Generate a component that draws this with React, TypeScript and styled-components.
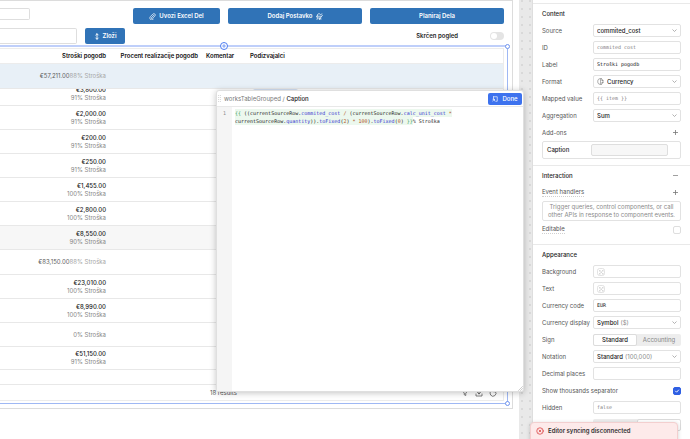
import React from "react";
import styled, { createGlobalStyle } from "styled-components";

const SANS = `Inter, "Liberation Sans", sans-serif`;
const MONO = `"DejaVu Sans Mono", "Liberation Mono", monospace`;

const GlobalStyle = createGlobalStyle`
  *, *::before, *::after { box-sizing: border-box; }
  body { margin: 0; background: #fff; overflow: hidden; }
  button, input, select { font: inherit; color: inherit; margin: 0; padding: 0; min-width: 0; }
  svg { display: block; flex: none; }
`;

const Shell = styled.div`
  position: relative;
  display: flex;
  height: 100vh;
  overflow: hidden;
  font-family: ${SANS};
  font-size: 6px;
  line-height: 8px;
  color: #1f1f1f;
`;

/* ---------- canvas ---------- */

const Workspace = styled.div`
  flex: 1;
  min-width: 0;
  padding-right: 13px;
  background: radial-gradient(circle at 1px 1px, #d9d9d9 1px, transparent 1px) 1px 0 / 8px 8px, #e9e9e9;
`;

const Page = styled.main`
  height: 100%;
  padding-right: 6px;
  background: #fff;
`;

const Frame = styled.div`
  border: solid #dcdcdc;
  border-width: 1px 1px 1px 0;
  padding: 7px 4px 4px 0;
`;

const ActionBar = styled.div`
  display: grid;
  grid-template-columns: 125px 87fr 134fr 134fr;
  gap: 8px;
  padding-right: 4px;
`;

const FilterBar = styled.div`
  display: flex;
  align-items: center;
  margin-top: 4px;
  padding-right: 4px;
`;

const SearchInput = styled.input<{ $w: number; $h: number }>`
  width: ${(p) => p.$w}px;
  height: ${(p) => p.$h}px;
  border: 1px solid #dedede;
  border-left: 0;
  border-radius: 0 2px 2px 0;
  background: #fff;
  outline: none;
`;

const PrimaryButton = styled.button`
  display: flex;
  align-items: center;
  justify-content: center;
  gap: 3px;
  height: 16px;
  padding: 0 9px;
  border: 0;
  border-radius: 2px;
  background: #3073b7;
  color: #fff;
  font-weight: 600;
`;

const CollapseButton = styled(PrimaryButton)`
  width: 40px;
  margin-left: 8px;
  padding: 0;
`;

const SwitchLabel = styled.label`
  display: flex;
  flex: 1;
  align-items: center;
  justify-content: flex-end;
  gap: 32px;
  font-weight: 600;
`;

const Switch = styled.input`
  appearance: none;
  display: flex;
  width: 14px;
  height: 8px;
  padding: 1px;
  border-radius: 4px;
  background: #e4e4e4;
  &::before {
    content: "";
    width: 6px;
    height: 6px;
    border-radius: 3px;
    background: #fff;
  }
`;

const Selection = styled.div`
  position: relative;
  margin-top: 1px;
  padding: 1px 3px 2px 0;
  border: solid #9fb8f4;
  border-width: 2px 1px 1px 0;
  border-top-color: #bfcffa;
`;

const Handle = styled.span<{ $corner: "top" | "bottom" }>`
  position: absolute;
  right: -3px;
  ${(p) => p.$corner}: -3px;
  width: 5px;
  height: 5px;
  border: 1px solid #6f94ee;
  border-radius: 3px;
  background: #fff;
`;

const AddHandle = styled.button`
  position: absolute;
  left: 220px;
  top: -5px;
  display: grid;
  place-items: center;
  width: 8px;
  height: 8px;
  border: 1px solid #4d7cf0;
  border-radius: 4px;
  background: #fff;
  color: #4d7cf0;
`;

const Grid = styled.table`
  width: 100%;
  table-layout: fixed;
  border-collapse: separate;
  border-spacing: 0;
  border: solid #ececec;
  border-width: 1px 1px 0 0;
`;

const HeadCell = styled.th<{ $right?: boolean }>`
  height: 15px;
  padding: 0 8px 0 0;
  border-bottom: 1px solid #ececec;
  text-align: ${(p) => (p.$right ? "right" : "left")};
  font-weight: 600;
  white-space: nowrap;
  color: #111;
`;

type Tone = "plain" | "group" | "hover";
const toneBg = { plain: "#fff", group: "#e8f0f7", hover: "#f7f7f7" };

const Row = styled.tr<{ $h: number; $tone: Tone }>`
  height: ${(p) => p.$h}px;
  background: ${(p) => toneBg[p.$tone]};
`;

const Cell = styled.td`
  padding: 0 8px 0 0;
  border-bottom: 1px solid #e8e8e8;
  text-align: right;
  white-space: nowrap;
`;

const Clip = styled.div`
  display: flex;
  flex-direction: column;
  justify-content: flex-end;
  height: 16px;
  padding-bottom: 3px;
  overflow: hidden;
`;

const Tag = styled.div`
  width: 45px;
  height: 12px;
  margin: 0 0 4px 3px;
  border-radius: 2px;
  background: #d3e0f4;
`;

const Amount = styled.div`
  font-weight: 500;
  color: #1a1a1a;
`;

const Caption = styled.div`
  color: #858585;
`;

const Summary = styled.span`
  color: #5d5d5d;
  small { font-size: 6px; color: #a6a6a6; }
`;

const TableFooter = styled.footer`
  display: flex;
  align-items: center;
  justify-content: flex-end;
  height: 16px;
  padding-right: 6px;
  border: solid #ececec;
  border-width: 0 1px 1px 0;
  color: #555;
`;

const ResultCount = styled.span`
  margin-right: auto;
  margin-left: 210px;
`;

const FooterIcons = styled.div`
  display: flex;
  gap: 6px;
`;

/* ---------- code popup ---------- */

const Popup = styled.section`
  position: absolute;
  left: 216px;
  right: 166px;
  top: 90px;
  height: 302px;
  display: flex;
  flex-direction: column;
  border: 1px solid #dfdfdf;
  border-radius: 3px;
  background: #fff;
  box-shadow: 0 1px 6px rgba(0, 0, 0, 0.24);
`;

const PopupHeader = styled.header`
  display: flex;
  align-items: center;
  gap: 3px;
  height: 16px;
  padding: 0 1px;
  border-bottom: 1px solid #e8e8e8;
  color: #777;
  strong { font-weight: 500; color: #222; }
`;

const DoneButton = styled.button`
  display: flex;
  align-items: center;
  justify-content: center;
  gap: 4px;
  width: 34px;
  height: 12px;
  margin-left: auto;
  border: 0;
  border-radius: 2px;
  background: #3d72ee;
  color: #fff;
  font-weight: 500;
`;

const Editor = styled.div`
  display: flex;
  flex: 1;
  font-family: ${MONO};
  font-size: 5px;
  line-height: 8px;
`;

const Gutter = styled.div`
  width: 15px;
  padding: 2px 6px 0 0;
  background: #f5f5f5;
  color: #8b8b8b;
  text-align: right;
`;

const Code = styled.pre`
  margin: 0;
  padding: 2px 3px;
  font: inherit;
  color: #1c1c1c;
`;

const Template = styled.span`
  padding: 1px 0;
  background: #ecf8ee;
`;

const Tok = styled.span<{ $c: "brace" | "prop" | "num" }>`
  color: ${(p) => ({ brace: "#3ba35c", prop: "#3434d0", num: "#b3541e" })[p.$c]};
`;

const Grip = styled.svg`
  position: absolute;
  right: 0;
  bottom: 0;
`;

/* ---------- inspector ---------- */

const Inspector = styled.aside`
  flex: none;
  width: 158px;
  height: 100%;
  overflow: hidden;
  border-left: 1px solid #dedede;
  background: #fff;
  color: #555;
`;

const Section = styled.section`
  padding: 1px 9px 6px;
  border-top: 1px solid #e9e9e9;
`;

const InspectorTop = styled.div`
  height: 3px;
`;

const Line = styled.div`
  display: flex;
  align-items: center;
  justify-content: space-between;
  height: 17px;
`;

const Title = styled.h2`
  margin: 0;
  font-size: 6px;
  font-weight: 500;
  color: #222;
`;

const Name = styled.label<{ $hint?: boolean }>`
  white-space: nowrap;
  border-bottom: ${(p) => (p.$hint ? "1px dotted #d0d0d0" : "0")};
`;

const Field = styled.span`
  display: flex;
  align-items: center;
  gap: 3px;
  width: 88px;
  height: 13px;
  padding: 0 3px;
  border: 1px solid #e2e2e2;
  border-radius: 2px;
  background: #fff;
`;

const MonoInput = styled.input`
  width: 100%;
  height: 11px;
  border: 0;
  outline: 0;
  background: transparent;
  font-family: ${MONO};
  font-size: 5px;
  line-height: 11px;
  color: #111;
  &::placeholder { color: #808080; opacity: 1; }
`;

const SelectBox = styled.select`
  appearance: none;
  flex: 1;
  border: 0;
  outline: 0;
  background: transparent;
  font-weight: 500;
  color: #262626;
`;

const Rich = styled.button`
  display: flex;
  flex: 1;
  gap: 2px;
  border: 0;
  background: transparent;
  font-weight: 500;
  color: #262626;
  span { font-weight: 400; color: #8a8a8a; }
`;

const IconButton = styled.button`
  display: flex;
  justify-content: center;
  width: 12px;
  border: 0;
  background: transparent;
  color: #777;
`;

const Addon = styled.div`
  display: flex;
  align-items: center;
  justify-content: space-between;
  height: 18px;
  padding: 0 12px 0 4px;
  border: 1px solid #e2e2e2;
  border-radius: 2px;
  color: #262626;
  font-weight: 500;
`;

const AddonValue = styled.input`
  width: 77px;
  height: 12px;
  border: 1px solid #dedede;
  border-radius: 2px;
  background: #f7f7f7;
`;

const EmptyState = styled.p`
  margin: 0;
  padding: 1px 4px;
  border: 1px solid #e2e2e2;
  border-radius: 2px;
  text-align: center;
  color: #8a8a8a;
`;

const Check = styled.input`
  appearance: none;
  width: 8px;
  height: 8px;
  border: 1px solid #dedede;
  border-radius: 2px;
  background: #fff;
  &:checked {
    border-color: #2f5fe3;
    background: #2f5fe3;
  }
`;

const CheckWrap = styled.span`
  display: grid;
  place-items: center;
  > * { grid-area: 1 / 1; }
  svg { z-index: 1; pointer-events: none; }
`;

const Segments = styled.div`
  display: grid;
  grid-template-columns: 1fr 1fr;
  width: 88px;
  height: 12px;
  border-radius: 2px;
  background: #ededed;
`;

const Segment = styled.button<{ $on?: boolean }>`
  border: 1px solid ${(p) => (p.$on ? "#dcdcdc" : "transparent")};
  border-radius: 2px;
  background: ${(p) => (p.$on ? "#fff" : "transparent")};
  color: ${(p) => (p.$on ? "#222" : "#858585")};
  font-weight: ${(p) => (p.$on ? 500 : 400)};
`;

const Toast = styled.div`
  position: absolute;
  right: 12px;
  bottom: -12px;
  display: flex;
  gap: 4px;
  width: 148px;
  height: 29px;
  padding: 4px 5px;
  border: 1px solid #f3cfcf;
  border-radius: 4px;
  background: #fdeaea;
  box-shadow: 0 1px 4px rgba(0, 0, 0, 0.18);
  color: #333;
  font-weight: 600;
`;

/* ---------- icons ---------- */

const stroke = { fill: "none", stroke: "currentColor", strokeLinecap: "round", strokeLinejoin: "round" } as const;

const Chevron = () => (
  <svg width="5" height="5" viewBox="0 0 10 10" {...stroke} stroke="#a0a0a0" strokeWidth="1.6"><path d="M1.5 3.5 5 7l3.5-3.5" /></svg>
);
const Plus = () => (
  <svg width="5" height="5" viewBox="0 0 10 10" {...stroke} strokeWidth="1.6"><path d="M5 0.8v8.4M0.8 5h8.4" /></svg>
);
const Minus = () => (
  <svg width="5" height="5" viewBox="0 0 10 10" {...stroke} strokeWidth="1.4"><path d="M0.8 5h8.4" /></svg>
);
const PaperClip = () => (
  <svg width="7" height="7" viewBox="0 0 14 14" {...stroke} strokeWidth="1.4">
    <path d="M9.5 4.5 5 9a1.3 1.3 0 0 0 1.9 1.9l5-5A2.8 2.8 0 0 0 7.9 2L2.8 7.1a4 4 0 0 0 5.7 5.7" />
  </svg>
);
const Barrow = () => (
  <svg width="7" height="7" viewBox="0 0 14 14" {...stroke} strokeWidth="1.4">
    <path d="M1 6.5h10L9 10H4zM3 6V3l3-2 3 2 3-1M11 6.5 13 5M3 10l-1 3M9 10l1 2" /><circle cx="7" cy="12" r="1" />
  </svg>
);
const UpDown = () => (
  <svg width="6" height="7" viewBox="0 0 12 14" {...stroke} strokeWidth="1.8"><path d="M6 1.5v11M3.5 4 6 1.5 8.5 4M3.5 10 6 12.5 8.5 10" /></svg>
);
const DoneIcon = () => (
  <svg width="6" height="6" viewBox="0 0 12 12" {...stroke} strokeWidth="1.3">
    <path d="M3 1.5h7.5v9H7.5M3 1.5v5M1 10.5l4-4M2 6.5h3v3" />
  </svg>
);
const Coins = () => (
  <svg width="7" height="7" viewBox="0 0 14 14" {...stroke} stroke="#777" strokeWidth="1.3">
    <path d="M8 1.5H5.5C3 1.5 1.5 4 1.5 7s1.5 5.5 4 5.5H8" /><path d="M8 1.5c2.5 0 4 2.5 4 5.5s-1.5 5.5-4 5.5M8 1.5C6.500 3 6.500 11 8 12.5M10 5h2M10 9h2" />
  </svg>
);
const Swatch = () => (
  <svg width="8" height="8" viewBox="0 0 16 16">
    <rect x="1" y="1" width="14" height="14" rx="4" fill="#fff" stroke="#dadada" strokeWidth="1.5" />
    <path d="M4 4h3v3H4zM10 4h3v3h-3zM7 7h3v3H7zM4 10h3v3H4zM10 10h3v3h-3z" fill="#d8d8d8" />
  </svg>
);
const Dots = () => (
  <svg width="3" height="7" viewBox="0 0 6 14" fill="#aaa">
    {[1, 5, 9, 13].map((y) => (<g key={y}><circle cx="1.5" cy={y} r="0.9" /><circle cx="4.5" cy={y} r="0.9" /></g>))}
  </svg>
);

/* ---------- data ---------- */

type RowData = { h: number; tone?: Tone; amount?: string; pct?: string; summary?: boolean; clipped?: boolean };

const rows: RowData[] = [
  { h: 25, tone: "group", amount: "€57,211.00", pct: "88%", summary: true },
  { h: 17, amount: "€3,800.00", pct: "91%", clipped: true },
  { h: 24, amount: "€2,000.00", pct: "91%" },
  { h: 24, amount: "€200.00", pct: "91%" },
  { h: 24, amount: "€250.00", pct: "91%" },
  { h: 24, amount: "€1,455.00", pct: "100%" },
  { h: 24, amount: "€2,800.00", pct: "100%" },
  { h: 24, tone: "hover", amount: "€8,550.00", pct: "90%" },
  { h: 25, amount: "€83,150.00", pct: "88%", summary: true },
  { h: 24, amount: "€23,010.00", pct: "100%" },
  { h: 24, amount: "€8,990.00", pct: "100%" },
  { h: 24, pct: "0%" },
  { h: 23, amount: "€51,150.00", pct: "91%" },
  { h: 15 },
];

function CellContent({ row }: { row: RowData }) {
  if (!row.pct) return null;
  if (row.summary) return <Summary>{row.amount}<small>{row.pct} Stroška</small></Summary>;
  const body = (
    <>
      {row.amount && <Amount>{row.amount}</Amount>}
      <Caption>{row.pct} Stroška</Caption>
    </>
  );
  return row.clipped ? <Clip>{body}</Clip> : body;
}

function SelectLine({ label, value, icon }: { label: string; value: string; icon?: React.ReactNode }) {
  return (
    <Line>
      <Name htmlFor={label}>{label}</Name>
      <Field>{icon}<SelectBox id={label}><option>{value}</option></SelectBox><Chevron /></Field>
    </Line>
  );
}

function RichSelectLine({ label, value, note }: { label: string; value: string; note: string }) {
  return (
    <Line>
      <Name htmlFor={label}>{label}</Name>
      <Field><Rich id={label} aria-haspopup="listbox">{value} <span>{note}</span></Rich><Chevron /></Field>
    </Line>
  );
}

function TextLine({ label, value, placeholder, swatch }: { label: string; value?: string; placeholder?: string; swatch?: boolean }) {
  return (
    <Line>
      <Name htmlFor={label}>{label}</Name>
      <Field>{swatch && <Swatch />}<MonoInput id={label} defaultValue={value} placeholder={placeholder} /></Field>
    </Line>
  );
}

export default function App() {
  return (
    <>
      <GlobalStyle />
      <Shell>
        <Workspace>
          <Page>
            <Frame>
              <ActionBar>
                <SearchInput $w={30} $h={12} aria-label="Filter" />
                <PrimaryButton><PaperClip />Uvozi Excel Del</PrimaryButton>
                <PrimaryButton>Dodaj Postavko<Barrow /></PrimaryButton>
                <PrimaryButton>Planiraj Dela</PrimaryButton>
              </ActionBar>
              <FilterBar>
                <SearchInput $w={77} $h={16} aria-label="Search" />
                <CollapseButton><UpDown />Zloži</CollapseButton>
                <SwitchLabel>Skrčen pogled<Switch type="checkbox" role="switch" /></SwitchLabel>
              </FilterBar>
              <Selection>
                <Grid>
                  <colgroup><col width="114" /><col width="92" /><col width="44" /><col /></colgroup>
                  <thead>
                    <tr>
                      <HeadCell $right>Stroški pogodb</HeadCell>
                      <HeadCell $right>Procent realizacije pogodb</HeadCell>
                      <HeadCell>Komentar</HeadCell>
                      <HeadCell>Podizvajalci</HeadCell>
                    </tr>
                  </thead>
                  <tbody>
                    {rows.map((r, i) => (
                      <Row key={i} $h={r.h} $tone={r.tone ?? "plain"}>
                        <Cell><CellContent row={r} /></Cell><Cell /><Cell /><Cell>{r.clipped && <Tag />}</Cell>
                      </Row>
                    ))}
                  </tbody>
                </Grid>
                <TableFooter>
                  <ResultCount>18 results</ResultCount>
                  <FooterIcons>
                    <svg width="8" height="8" viewBox="0 0 16 16" {...stroke} strokeWidth="1.5"><path d="M2 3h12L9.500 8.500V13l-3-1.500v-3z" /></svg>
                    <svg width="8" height="8" viewBox="0 0 16 16" {...stroke} strokeWidth="1.5"><path d="M8 2v8M5 7l3 3 3-3M2 10v4h12v-4" /></svg>
                    <svg width="8" height="8" viewBox="0 0 16 16" {...stroke} strokeWidth="1.5"><path d="M13 5a6 6 0 1 1-9-1M13 2v3.500H9.500" /></svg>
                  </FooterIcons>
                </TableFooter>
                <AddHandle aria-label="Add column">
                  <svg width="6" height="6" viewBox="0 0 12 12" {...stroke} strokeWidth="1.4"><path d="M6 3v6M3 6h6" /></svg>
                </AddHandle>
                <Handle $corner="top" />
                <Handle $corner="bottom" />
              </Selection>
            </Frame>
          </Page>
        </Workspace>

        <Inspector>
          <InspectorTop />
          <Section>
            <Line><Title>Content</Title></Line>
            <SelectLine label="Source" value="commited_cost" />
            <TextLine label="ID" placeholder="commited_cost" />
            <TextLine label="Label" value="Stroški pogodb" />
            <SelectLine label="Format" value="Currency" icon={<Coins />} />
            <TextLine label="Mapped value" placeholder="{{ item }}" />
            <SelectLine label="Aggregation" value="Sum" />
            <Line><span>Add-ons</span><IconButton aria-label="Add add-on"><Plus /></IconButton></Line>
            <Addon><label htmlFor="addon">Caption</label><AddonValue id="addon" /></Addon>
          </Section>
          <Section>
            <Line><Title>Interaction</Title><IconButton aria-label="Collapse"><Minus /></IconButton></Line>
            <Line><Name as="span" $hint>Event handlers</Name><IconButton aria-label="Add handler"><Plus /></IconButton></Line>
            <EmptyState>Trigger queries, control components, or call other APIs in response to component events.</EmptyState>
            <Line><Name $hint htmlFor="editable">Editable</Name><Check id="editable" type="checkbox" /></Line>
          </Section>
          <Section>
            <Line><Title>Appearance</Title></Line>
            <TextLine label="Background" swatch />
            <TextLine label="Text" swatch />
            <TextLine label="Currency code" value="EUR" />
            <RichSelectLine label="Currency display" value="Symbol" note="($)" />
            <Line><span>Sign</span><Segments><Segment $on>Standard</Segment><Segment>Accounting</Segment></Segments></Line>
            <RichSelectLine label="Notation" value="Standard" note="(100,000)" />
            <TextLine label="Decimal places" />
            <Line>
              <Name htmlFor="thousands">Show thousands separator</Name>
              <CheckWrap>
                <Check id="thousands" type="checkbox" defaultChecked />
                <svg width="6" height="6" viewBox="0 0 12 12" {...stroke} stroke="#fff" strokeWidth="1.8"><path d="m3 6.2 2.2 2.2L9.2 4" /></svg>
              </CheckWrap>
            </Line>
            <TextLine label="Hidden" placeholder="false" />
            <Line><span /><Segments><Segment aria-label="Off" /><Segment $on aria-label="On" /></Segments></Line>
          </Section>
        </Inspector>

        <Popup>
          <PopupHeader>
            <Dots />
            <span>worksTableGrouped / <strong>Caption</strong></span>
            <DoneButton><DoneIcon />Done</DoneButton>
          </PopupHeader>
          <Editor>
            <Gutter>1</Gutter>
            <Code>
              <Template>
                <Tok $c="brace">{"{{"}</Tok>{" ((currentSourceRow."}<Tok $c="prop">commited_cost</Tok> <Tok $c="num">/</Tok>{" (currentSourceRow."}<Tok $c="prop">calc_unit_cost</Tok> <Tok $c="num">*</Tok>{"\n"}
                {"currentSourceRow."}<Tok $c="prop">quantity</Tok>{"))."}<Tok $c="prop">toFixed</Tok>(<Tok $c="num">2</Tok>) <Tok $c="num">*</Tok> <Tok $c="num">100</Tok>{")."}<Tok $c="prop">toFixed</Tok>(<Tok $c="num">0</Tok>) <Tok $c="brace">{"}}"}</Tok>
              </Template>
              % Stroška
            </Code>
          </Editor>
          <Grip width="5" height="5" viewBox="0 0 10 10" {...stroke} stroke="#999"><path d="M1 9l8-8M5 9l4-4" /></Grip>
        </Popup>

        <Toast role="alert">
          <svg width="8" height="8" viewBox="0 0 16 16" {...stroke} stroke="#d93f3f" strokeWidth="1.5"><circle cx="8" cy="8" r="6.5" /><path d="m6 6 4 4M10 6l-4 4" /></svg>
          Editor syncing disconnected
        </Toast>
      </Shell>
    </>
  );
}
